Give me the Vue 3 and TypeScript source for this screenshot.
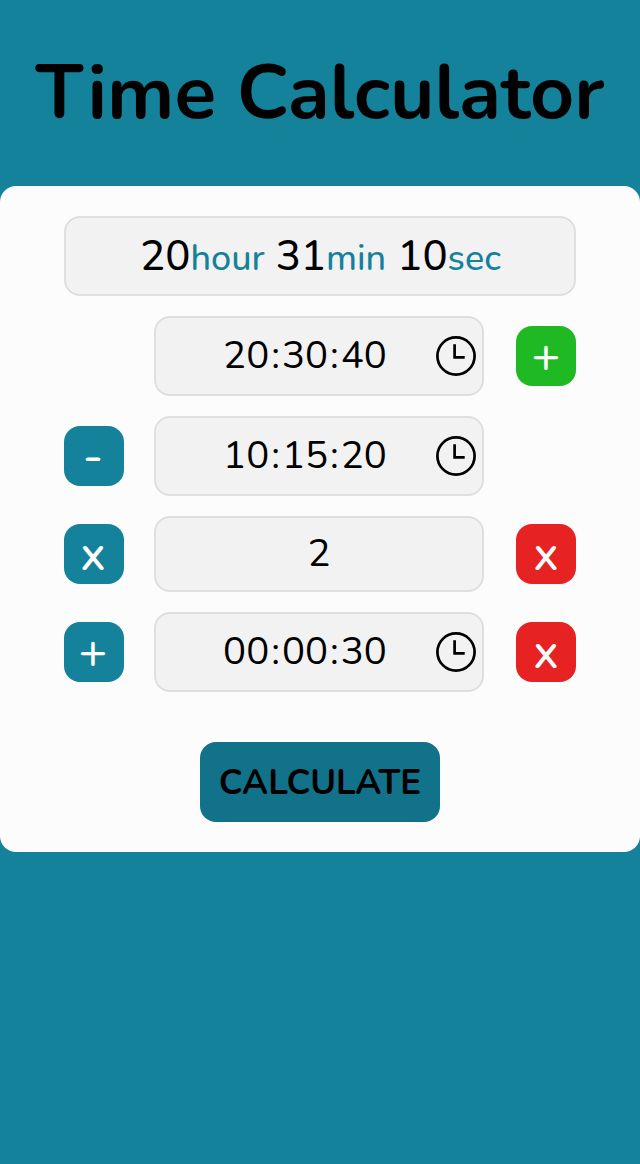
<script setup lang="ts">
interface Row {
  value: string
  time: boolean
  operator?: string
  action?: { label: string; kind: 'add' | 'remove' }
}

const result = [
  { amount: '20', unit: 'hour' },
  { amount: '31', unit: 'min' },
  { amount: '10', unit: 'sec' },
]

const rows: Row[] = [
  { value: '20:30:40', time: true, action: { label: '+', kind: 'add' } },
  { value: '10:15:20', time: true, operator: '-' },
  { value: '2', time: false, operator: 'x', action: { label: 'x', kind: 'remove' } },
  { value: '00:00:30', time: true, operator: '+', action: { label: 'x', kind: 'remove' } },
]

const pieces = (value: string) => value.split(/(:)/)
</script>

<template>
  <div class="page">
    <h1 class="title">Time Calculator</h1>
    <main class="card">
      <div class="result">
        <span v-for="part in result" :key="part.unit"><span class="amount">{{ part.amount }}</span><span class="unit">{{ part.unit }}</span></span>
      </div>
      <div v-for="(row, i) in rows" :key="i" class="row">
        <button v-if="row.operator" class="btn operator">{{ row.operator }}</button>
        <div class="field" :class="{ plain: !row.time }">
          <span class="value"><span v-for="(piece, j) in pieces(row.value)" :key="j" :class="{ colon: piece === ':' }">{{ piece }}</span></span>
          <svg v-if="row.time" class="clock" viewBox="0 0 40 40">
            <circle cx="20" cy="20" r="18.6" />
            <path d="M18.6 8.3V21.4H28.7" />
          </svg>
        </div>
        <button v-if="row.action" class="btn action" :class="row.action.kind">{{ row.action.label }}</button>
      </div>
      <button class="calculate">CALCULATE</button>
    </main>
  </div>
</template>

<style>
html,
body {
  margin: 0;
  background: #14829b;
}
</style>

<style scoped>
.page {
  min-height: 1164px;
  background: #14829b;
  color: #000;
  font-family: Nunito, Lato, 'Open Sans', sans-serif;
}
* {
  box-sizing: border-box;
}
.title {
  height: 186px;
  margin: 0;
  line-height: 186px;
  text-align: center;
  white-space: nowrap;
  font-size: 76.8px;
  font-weight: 700;
}
.card {
  display: flex;
  flex-direction: column;
  gap: 20px;
  padding: 30px 64px;
  background: #fcfcfc;
  border-radius: 16px;
}
.result {
  display: flex;
  justify-content: center;
  gap: 11px;
  height: 80px;
  padding-left: 1px;
  border: 2px solid #dfdfdf;
  border-radius: 16px;
  background: #f2f2f2;
  line-height: 78px;
  white-space: nowrap;
}
.amount {
  font-size: 42px;
  font-weight: 500;
}
.unit {
  font-size: 36px;
  font-weight: 500;
  color: #14829b;
}
.row {
  display: grid;
  grid-template-columns: 90px 362px 60px;
  align-items: center;
}
.field {
  grid-column: 2;
  grid-row: 1;
  display: flex;
  align-items: center;
  width: 330px;
  height: 80px;
  padding-right: 6px;
  border: 2px solid #dfdfdf;
  border-radius: 16px;
  background: #f2f2f2;
}
.plain {
  height: 76px;
  padding: 0;
}
.value {
  flex: 1;
  padding-left: 18px;
  text-align: center;
  font-size: 38.4px;
  font-weight: 400;
  line-height: 72px;
}
.colon {
  padding: 0 2px;
}
.plain .value {
  padding: 0;
}
.clock {
  width: 40px;
  height: 40px;
  fill: none;
  stroke: #000;
  stroke-width: 2.7;
}
.btn {
  width: 60px;
  height: 60px;
  padding: 0;
  border: 0;
  border-radius: 16px;
  background: #14829b;
  color: #fff;
  font: 500 48px/61px Nunito, Lato, sans-serif;
  text-align: center;
  grid-row: 1;
}
.operator {
  grid-column: 1;
  padding-right: 2px;
}
.action {
  grid-column: 3;
}
.add {
  background: #1fba23;
}
.remove {
  background: #e62222;
}
.calculate {
  align-self: center;
  width: 240px;
  height: 80px;
  margin-top: 30px;
  padding: 1px 0 0;
  border: 0;
  border-radius: 16px;
  background: #12728a;
  color: #000;
  font: 700 35px/80px Nunito, Lato, sans-serif;
}
</style>
